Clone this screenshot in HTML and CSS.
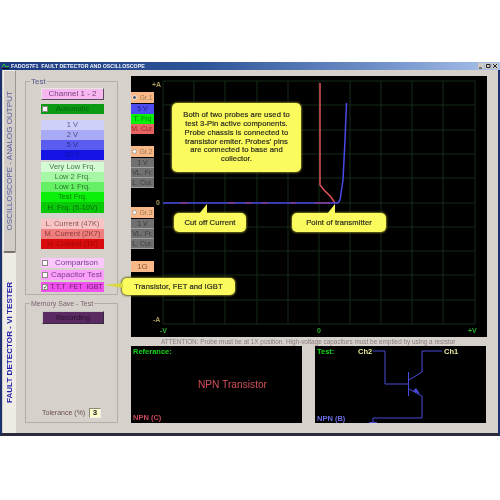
FILE: index.html
```html
<!DOCTYPE html>
<html lang="en">
<head>
<meta charset="utf-8">
<title>FADOS7F1</title>
<link rel="stylesheet" href="styles.css">
</head>
<body>
<div class="window">
  <div class="titlebar">
    <svg class="app-icon" viewBox="0 0 7 6"><path d="M0 4 L2 1 L4 4 L7 3" fill="none" stroke="#3c3" stroke-width="1"/><path d="M0 5.5H7" stroke="#111" stroke-width="1"/></svg>
    <span class="title-text">FADOS7F1&nbsp; FAULT DETECTOR AND OSCILLOSCOPE</span>
    <span class="win-btns">
      <svg class="win-btn" viewBox="0 0 6 6"><path d="M1 5H4" stroke="#222" stroke-width="1"/></svg>
      <svg class="win-btn" viewBox="0 0 6 6"><path d="M1.500 1.500H5V4.500H1.500Z" fill="none" stroke="#222" stroke-width="1"/></svg>
      <svg class="win-btn" viewBox="0 0 6 6"><path d="M1 1L5 5M5 1L1 5" stroke="#222" stroke-width="1"/></svg>
    </span>
  </div>
  <div class="content">
    <div class="tabs">
      <div class="tab tab-off"><span class="tab-label">OSCILLOSCOPE - ANALOG OUTPUT</span></div>
      <div class="tab tab-on"><span class="tab-label tab-label-on">FAULT DETECTOR - VI TESTER</span></div>
    </div>
    <div class="sidebar">
      <div class="group group-test">
        <span class="legend">Test</span>
        <div class="btn btn-channel">Channel 1 - 2</div>
        <div class="btn btn-auto"><span class="check"></span>Automatic</div>
        <div class="stack">
          <div class="btn v1">1 V</div>
          <div class="btn v2">2 V</div>
          <div class="btn v5">5 V</div>
          <div class="btn v10">10 V</div>
        </div>
        <div class="stack stack-tight">
          <div class="btn f1">Very Low Frq.</div>
          <div class="btn f2">Low 2 Frq.</div>
          <div class="btn f3">Low 1 Frq.</div>
          <div class="btn f4">Test Frq.</div>
          <div class="btn f5">H. Frq. (5-10V)</div>
        </div>
        <div class="stack">
          <div class="btn c1">L. Current (47K)</div>
          <div class="btn c2">M. Current (2K7)</div>
          <div class="btn c3">H. Current (1K)</div>
        </div>
        <div class="checks">
          <div class="btn chk k1"><span class="check"></span>Comparison</div>
          <div class="btn chk k2"><span class="check"></span>Capacitor Test</div>
          <div class="btn chk k3"><span class="check checked">✓</span>T.T.T&nbsp; FET&nbsp; IGBT</div>
        </div>
      </div>
      <div class="group group-memory">
        <span class="legend">Memory Save - Test</span>
        <div class="btn btn-record">Recording</div>
        <div class="tolerance"><span>Tolerance (%)</span><span class="tol-box">3</span></div>
      </div>
    </div>
    <div class="main">
      <div class="scope">
        <div class="gr-col">
          <div class="gr-group">
            <div class="gr-head"><span class="radio on"></span>Gr.1</div>
            <div class="gr g-blue">5 V</div>
            <div class="gr g-green">T. Frq</div>
            <div class="gr g-red">M. Cur.</div>
          </div>
          <div class="gr-group">
            <div class="gr-head"><span class="radio"></span>Gr.2</div>
            <div class="gr g-grey">1 V</div>
            <div class="gr g-grey">VL. Fr.</div>
            <div class="gr g-grey">L. Cur.</div>
          </div>
          <div class="gr-group gr-group-3">
            <div class="gr-head"><span class="radio"></span>Gr.3</div>
            <div class="gr g-grey">1 V</div>
            <div class="gr g-grey">VL. Fr.</div>
            <div class="gr g-grey">L. Cur.</div>
          </div>
          <div class="gr-head gr-1g">1G</div>
        </div>
        <svg class="plot" viewBox="154 76 333 261">
          <path class="grid" d="M163 81H475M163 105H475M163 130H475M163 154H475M163 178H475M163 203H475M163 227H475M163 251H475M163 275H475M163 300H475M163 324H475M163 81V324M194 81V324M225 81V324M257 81V324M288 81V324M319 81V324M350 81V324M381 81V324M412 81V324M443 81V324M475 81V324"/>
          <text class="ax ax-y" x="152" y="87">+A</text>
          <text class="ax ax-y" x="156" y="205">0</text>
          <text class="ax ax-y" x="153" y="322">-A</text>
          <text class="ax ax-g" x="160" y="333">-V</text>
          <text class="ax ax-g" x="317" y="333">0</text>
          <text class="ax ax-g" x="468" y="333">+V</text>
          <path class="trace-red" d="M320 83V185L324 190L331 197L335 203"/>
          <path class="trace-blue" d="M163 203H338L340 200L343 180L345 140L346.500 103"/>
          <path class="specs" d="M180 203H188M228 203H235M245 203H252M262 203H268M290 203H296M315 203H330"/>
        </svg>
        <div class="bubble bubble-main">Both of two probes are used to test 3-Pin active components. Probe chassis is connected to transistor emiter. Probes' pins are connected to base and collector.</div>
        <div class="bubble bubble-cut">Cut off Current</div>
        <div class="bubble bubble-point">Point of transmitter</div>
        <div class="bubble bubble-igbt">Transistor, FET and IGBT</div>
      </div>
      <div class="attention">ATTENTION: Probe must be at 1X position. High-voltage capacitors must be emptied by using a resistor</div>
      <div class="bottom">
        <div class="panel panel-ref">
          <div class="panel-title">Referance:</div>
          <div class="ref-name">NPN Transistor</div>
          <div class="ref-foot">NPN (C)</div>
        </div>
        <div class="panel panel-test">
          <svg class="schematic" viewBox="315 346 171 77">
            <text class="s-title" x="317" y="354">Test:</text>
            <text class="s-ch" x="358" y="354">Ch2</text>
            <text class="s-ch" x="444" y="354">Ch1</text>
            <text class="s-foot" x="317" y="421">NPN (B)</text>
            <path class="s-line" d="M373 351H385V384H408M408.500 372V396M409 380L422 372V351H442M409 389L422 396V418H373V422M369 422.500H377"/>
            <path class="s-fill" d="M413 391L420 394L416 388Z"/>
          </svg>
        </div>
      </div>
    </div>
  </div>
</div>
</body>
</html>
```
FILE: styles.css
```css
* { box-sizing: border-box; }
html, body { margin: 0; padding: 0; background: #fff; }
body {
  width: 500px;
  height: 500px;
  padding-top: 62px;
  overflow: hidden;
  font-family: "Liberation Sans", Arial, sans-serif;
}
.window {
  width: 500px;
  height: 374px;
  display: flex;
  flex-direction: column;
  background: #d6d2cb;
  border-left: 2px solid #1c2f6e;
  border-right: 2px solid #1c2f6e;
  border-bottom: 3px solid #2a2c3a;
  filter: blur(0.4px);
}
.titlebar {
  height: 8px;
  margin-left: -2px;
  margin-right: -2px;
  display: flex;
  align-items: center;
  gap: 2px;
  padding: 0 2px;
  background: linear-gradient(90deg, #1d3a80 0%, #2e5498 40%, #6f8fc8 75%, #a9c2ea 100%);
  color: #f2f4fa;
}
.app-icon { width: 7px; height: 6px; flex: none; }
.title-text { font-size: 5.3px; font-weight: 700; line-height: 8px; white-space: nowrap; }
.win-btns { margin-left: auto; display: flex; gap: 1px; }
.win-btn { width: 6px; height: 6px; background: #cfcbc4; display: block; }
.content { flex: 1; display: flex; min-height: 0; }
.tabs { width: 13px; display: flex; flex-direction: column; flex: none; margin-left: 1px; }
.tab { display: flex; align-items: center; justify-content: center; }
.tab-off {
  height: 183px;
  background: #d2cec7;
  border: 1px solid #f1efe9;
  border-right-color: #9b978f;
  border-bottom: 2px solid #77746d;
  border-radius: 0 0 2px 2px;
}
.tab-on { flex: 1; background: #efece6; }
.tab-label {
  writing-mode: vertical-rl;
  transform: rotate(180deg);
  font-size: 8.1px;
  color: #5a5a9e;
  white-space: nowrap;
}
.tab-label-on { color: #1c1ca8; font-weight: 700; font-size: 8.1px; }
.sidebar {
  width: 110px;
  flex: none;
  padding: 11px 7px 0 9px;
  display: flex;
  flex-direction: column;
  gap: 8px;
}
.group {
  position: relative;
  width: 93px;
  border: 1px solid #b3afa7;
  padding-left: 15px;
  display: flex;
  flex-direction: column;
}
.group-test { height: 214px; padding-top: 6px; }
.group-memory { height: 120px; padding-top: 7px; padding-bottom: 4px; }
.legend {
  position: absolute;
  top: -5px;
  left: 4px;
  padding: 0 1px;
  background: #d6d2cb;
  font-size: 7px;
  line-height: 9px;
  color: #7a6070;
  white-space: nowrap;
}
.group-test .legend { color: #55558a; font-size: 8px; }
.btn {
  width: 63px;
  height: 10px;
  display: flex;
  align-items: center;
  justify-content: center;
  font-size: 7.5px;
  line-height: 10px;
  white-space: nowrap;
  color: #4a5a4a;
}
.stack { display: flex; flex-direction: column; margin-top: 6px; }
.stack-tight { margin-top: 2px; }
.btn-channel {
  height: 12px;
  background: #f6b8ee;
  border: 1px solid #5a4a58;
  border-left-color: #e9e5e0;
  border-top-color: #e9e5e0;
  color: #7a3a80;
  font-size: 8px;
  font-weight: 400;
}
.btn-auto {
  position: relative;
  margin-top: 4px;
  height: 10px;
  background: #0a9a14;
  color: #0a660c;
}
.btn-auto .check { position: absolute; left: 1px; top: 2px; }
.check {
  width: 6px;
  height: 6px;
  flex: none;
  background: #fff;
  border: 1px solid #8a8680;
  font-size: 6px;
  line-height: 5px;
  color: #111;
  display: inline-block;
  text-align: center;
}
.v1 { background: #cfd0fa; color: #5a5a9a; }
.v2 { background: #a9aaf6; color: #4a4a8a; }
.v5 { background: #5a5cf0; color: #2a2a90; }
.v10 { background: #1414e4; color: #1010a8; }
.f1 { background: #d4fbd4; color: #4a7a4a; }
.f2 { background: #a6f8a6; color: #3a7a3a; }
.f3 { background: #66f066; color: #2a7a2a; }
.f4 { background: #0af00a; color: #0a7a0a; }
.f5 { background: #08c808; color: #056a05; height: 11px; }
.c1 { background: #f8c4c4; color: #8a5a5a; }
.c2 { background: #f08080; color: #8a3a3a; }
.c3 { background: #d80c0c; color: #a00808; }
.checks { display: flex; flex-direction: column; gap: 2px; margin-top: 9px; }
.chk { position: relative; padding-left: 8px; color: #7a3a90; font-size: 8px; }
.chk .check { position: absolute; left: 1px; top: 2px; }
.checked { color: #111; }
.k1 { background: #fbc8fb; }
.k2 { background: #fba0fb; }
.k3 { background: #f050ee; color: #6a206a; font-size: 7px; }
.btn-record {
  margin-left: 1px;
  width: 62px;
  height: 13px;
  background: #5a2a62;
  border: 1px solid #3a2a40;
  border-left-color: #c9c5c0;
  border-top-color: #c9c5c0;
  color: #2a1030;
  font-size: 7.5px;
}
.tolerance {
  margin-top: auto;
  margin-left: 1px;
  display: flex;
  align-items: center;
  justify-content: space-between;
  width: 59px;
  height: 11px;
  font-size: 7px;
  color: #6a5050;
  white-space: nowrap;
}
.tol-box {
  width: 12px;
  height: 10px;
  background: #fdfdc8;
  border: 1px solid #8a8878;
  border-right-color: #eee;
  border-bottom-color: #eee;
  color: #222;
  text-align: center;
  font-size: 8px;
  line-height: 8px;
  font-weight: 700;
}
.main {
  width: 356px;
  flex: none;
  margin-left: 5px;
  padding-top: 6px;
  display: flex;
  flex-direction: column;
}
.scope {
  position: relative;
  height: 261px;
  background: #000;
  display: flex;
}
.gr-col {
  width: 23px;
  flex: none;
  padding-top: 16px;
  display: flex;
  flex-direction: column;
}
.gr-group { display: flex; flex-direction: column; margin-bottom: 12px; }
.gr-group-3 { margin-top: 7px; }
.gr-head {
  height: 11px;
  margin-bottom: 1px;
  background: #f8b888;
  color: #9a7a50;
  font-size: 7px;
  line-height: 11px;
  display: flex;
  align-items: center;
  justify-content: center;
  gap: 2px;
}
.radio {
  width: 5px;
  height: 5px;
  flex: none;
  border-radius: 50%;
  background: #fff;
  border: 1px solid #a8a49c;
}
.radio.on { background: #556; border-color: #eee; }
.gr-1g { color: #8a5a30; font-size: 8px; }
.gr {
  height: 10px;
  font-size: 7px;
  line-height: 10px;
  text-align: center;
  white-space: nowrap;
}
.g-blue { background: #4c4cf0; color: #20207a; }
.g-green { background: #08f008; color: #067a06; }
.g-red { background: #e86464; color: #8a2a2a; }
.g-grey { background: #707070; color: #3c3c3c; border-bottom: 1px solid #a0a0a0; }
.plot { width: 333px; height: 261px; flex: none; display: block; overflow: visible; }
.grid { fill: none; stroke: #142a16; stroke-width: 1; }
.ax { font-family: "Liberation Sans", Arial, sans-serif; font-size: 7px; font-weight: 700; }
.ax-y { fill: #a89a60; }
.ax-g { fill: #28b028; }
.trace-red { fill: none; stroke: #e0505a; stroke-width: 1.500; }
.trace-blue { fill: none; stroke: #4a4ae8; stroke-width: 1.500; }
.specs { fill: none; stroke: #a83a70; stroke-width: 1; }
.bubble {
  position: absolute;
  background: #fbfb5e;
  border-radius: 5px;
  box-shadow: 0 0 2px 1px #6a6a20;
  color: #2a2a20;
  font-size: 7.6px;
  -webkit-text-stroke: 0.2px #2a2a20;
  letter-spacing: 0.1px;
  display: flex;
  align-items: center;
  justify-content: center;
  text-align: center;
  white-space: nowrap;
}
.bubble-main {
  left: 41px;
  top: 27px;
  width: 129px;
  height: 69px;
  padding: 0 10px;
  line-height: 8.700px;
  white-space: normal;
}
.bubble-cut { left: 43px; top: 137px; width: 72px; height: 19px; }
.bubble-point { left: 161px; top: 137px; width: 94px; height: 19px; }
.bubble-cut::before, .bubble-point::before, .bubble-igbt::before {
  content: "";
  position: absolute;
  width: 0;
  height: 0;
}
.bubble-cut::before {
  left: 25px;
  top: -9px;
  border-right: 8px solid #fbfb5e;
  border-top: 10px solid transparent;
}
.bubble-point::before {
  left: 35px;
  top: -9px;
  border-right: 8px solid #fbfb5e;
  border-top: 10px solid transparent;
}
.bubble-igbt { left: -9px; top: 202px; width: 113px; height: 17px; }
.bubble-igbt::before {
  left: -18px;
  top: 5px;
  border-right: 19px solid #d8d840;
  border-top: 2px solid transparent;
  border-bottom: 3px solid transparent;
}
.attention {
  height: 9px;
  padding-left: 30px;
  font-size: 6.4px;
  line-height: 9px;
  color: #8a7a80;
  white-space: nowrap;
}
.bottom { display: flex; gap: 13px; }
.panel { width: 171px; height: 77px; background: #000; }
.panel-ref {
  display: grid;
  grid-template-rows: auto 1fr auto;
  padding: 1px 2px;
}
.panel-title { font-size: 7.5px; font-weight: 700; color: #14d814; line-height: 9px; }
.ref-name { align-self: center; text-align: center; font-size: 10.2px; color: #d0505a; padding-left: 32px; }
.ref-foot { font-size: 7.5px; font-weight: 700; color: #c8485a; line-height: 9px; }
.schematic { display: block; width: 171px; height: 77px; }
.schematic text { font-family: "Liberation Sans", Arial, sans-serif; font-size: 7.5px; font-weight: 700; }
.s-title { fill: #14d814; }
.s-ch { fill: #e8e8a0; }
.s-foot { fill: #6a6ae0; }
.s-line { fill: none; stroke: #4a4ad8; stroke-width: 1; }
.s-fill { fill: #4a4ad8; }
```
